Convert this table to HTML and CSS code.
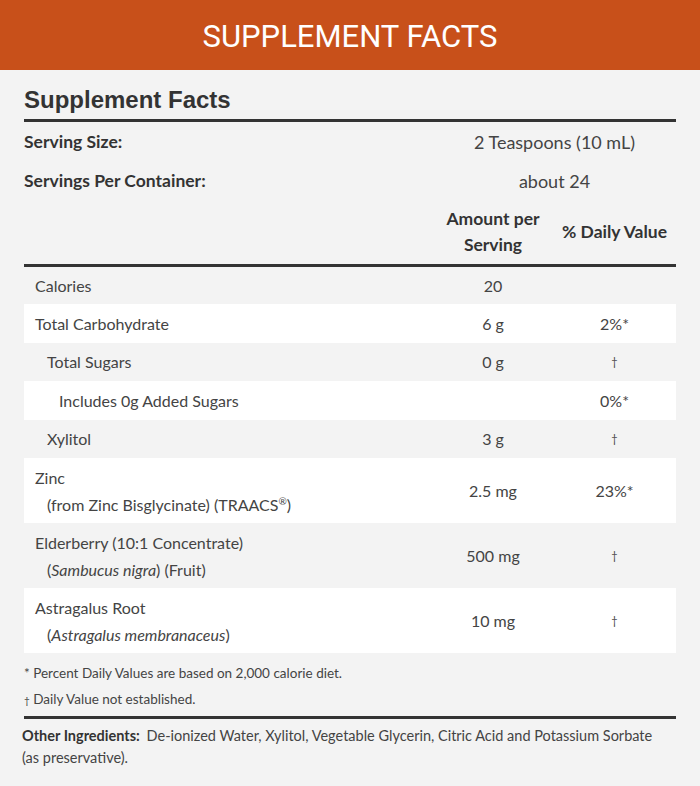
FILE: index.html
```html
<!DOCTYPE html>
<html>
<head>
<meta charset="utf-8">
<link rel="stylesheet" href="styles.css">
</head>
<body>
<header class="banner">SUPPLEMENT FACTS</header>
<main class="panel">
  <h1 class="title">Supplement Facts</h1>
  <table class="facts">
    <colgroup>
      <col class="c-label"><col class="c-amt"><col class="c-dv">
    </colgroup>
    <tbody class="serving">
      <tr><th class="lbl">Serving Size:</th><td colspan="2" class="ctr">2 Teaspoons (10 mL)</td></tr>
      <tr><th class="lbl">Servings Per Container:</th><td colspan="2" class="ctr">about 24</td></tr>
      <tr class="colhead"><th></th><th class="ctr">Amount per<br>Serving</th><th class="ctr">% Daily Value</th></tr>
    </tbody>
    <tbody class="rows">
      <tr><td class="name">Calories</td><td class="ctr">20</td><td class="ctr"></td></tr>
      <tr class="alt"><td class="name">Total Carbohydrate</td><td class="ctr">6 g</td><td class="ctr">2%*</td></tr>
      <tr><td class="name lv1">Total Sugars</td><td class="ctr">0 g</td><td class="ctr dag">†</td></tr>
      <tr class="alt"><td class="name lv2">Includes 0g Added Sugars</td><td class="ctr"></td><td class="ctr">0%*</td></tr>
      <tr><td class="name lv1">Xylitol</td><td class="ctr">3 g</td><td class="ctr dag">†</td></tr>
      <tr class="alt tall"><td class="name">Zinc<span class="sub">(from Zinc Bisglycinate) (TRAACS<sup>®</sup>)</span></td><td class="ctr">2.5 mg</td><td class="ctr">23%*</td></tr>
      <tr class="tall"><td class="name">Elderberry (10:1 Concentrate)<span class="sub">(<em>Sambucus nigra</em>) (Fruit)</span></td><td class="ctr">500 mg</td><td class="ctr dag">†</td></tr>
      <tr class="alt tall"><td class="name">Astragalus Root<span class="sub">(<em>Astragalus membranaceus</em>)</span></td><td class="ctr">10 mg</td><td class="ctr dag">†</td></tr>
    </tbody>
  </table>
  <p class="note">* Percent Daily Values are based on 2,000 calorie diet.</p>
  <p class="note"><span class="dg">†</span> Daily Value not established.</p>
  <div class="other"><p class="other-text"><strong class="oi-label">Other Ingredients:</strong> De-ionized Water, Xylitol, Vegetable Glycerin, Citric Acid and Potassium Sorbate (as preservative).</p></div>
</main>
</body>
</html>
```
FILE: styles.css
```css
html, body {
  margin: 0;
  padding: 0;
  background: #f3f3f3;
}
body {
  font-family: Lato, "Open Sans", sans-serif;
  color: #3a3a3a;
  width: 700px;
  height: 786px;
  overflow: hidden;
}
.banner {
  background: #c8501a;
  color: #ffffff;
  height: 70px;
  display: flex;
  align-items: center;
  justify-content: center;
  font-family: Roboto, sans-serif;
  font-size: 31px;
  font-weight: 400;
  padding-top: 2px;
  box-sizing: border-box;
}
.panel {
  padding: 0 24px;
}
.title {
  margin: 0;
  padding-top: 15px;
  height: 34px;
  line-height: 30px;
  font-family: "Liberation Sans", Arial, sans-serif;
  font-weight: 700;
  font-size: 24px;
  color: #333;
  border-bottom: 3px solid #333;
}
.facts {
  width: 652px;
  border-collapse: collapse;
  table-layout: fixed;
  font-size: 16px;
}
.c-label { width: 409px; }
.c-amt { width: 120px; }
.c-dv { width: 123px; }
.facts th, .facts td {
  padding: 0;
  vertical-align: middle;
}
.serving th.lbl {
  text-align: left;
  font-weight: 700;
  font-size: 17.5px;
  color: #333;
  height: 39px;
}
.serving td {
  font-size: 18px;
  color: #444;
  height: 39px;
}
.colhead th {
  height: 64px;
  font-size: 17.5px;
  font-weight: 700;
  line-height: 26px;
  color: #333;
  border-bottom: 3px solid #333;
}
.ctr { text-align: center; }
.rows tr { height: 38.5px; }
.rows tr.tall { height: 65px; }
.rows tr.alt td { background: #ffffff; }
.rows td { color: #444; }
.name { padding-left: 11px !important; line-height: 27px; }
.name.lv1 { padding-left: 23px !important; }
.name.lv2 { padding-left: 35px !important; }
.sub {
  display: block;
  padding-left: 12px;
}
.sub sup { font-size: 10px; line-height: 0; }
.dag { font-size: 11px; }
.note {
  margin: 0;
  font-size: 13.5px;
  height: 26px;
  line-height: 26px;
  color: #444;
}
.note:first-of-type { margin-top: 7px; }
.dg { font-size: 10px; }
.other {
  margin-top: 4px;
  padding-top: 6px;
  border-top: 3px solid #333;
}
.other-text {
  margin: 0 0 0 -2px;
  max-width: 640px;
  font-size: 14.5px;
  line-height: 22px;
  color: #444;
}
.oi-label { color: #333; margin-right: 3px; }
```
